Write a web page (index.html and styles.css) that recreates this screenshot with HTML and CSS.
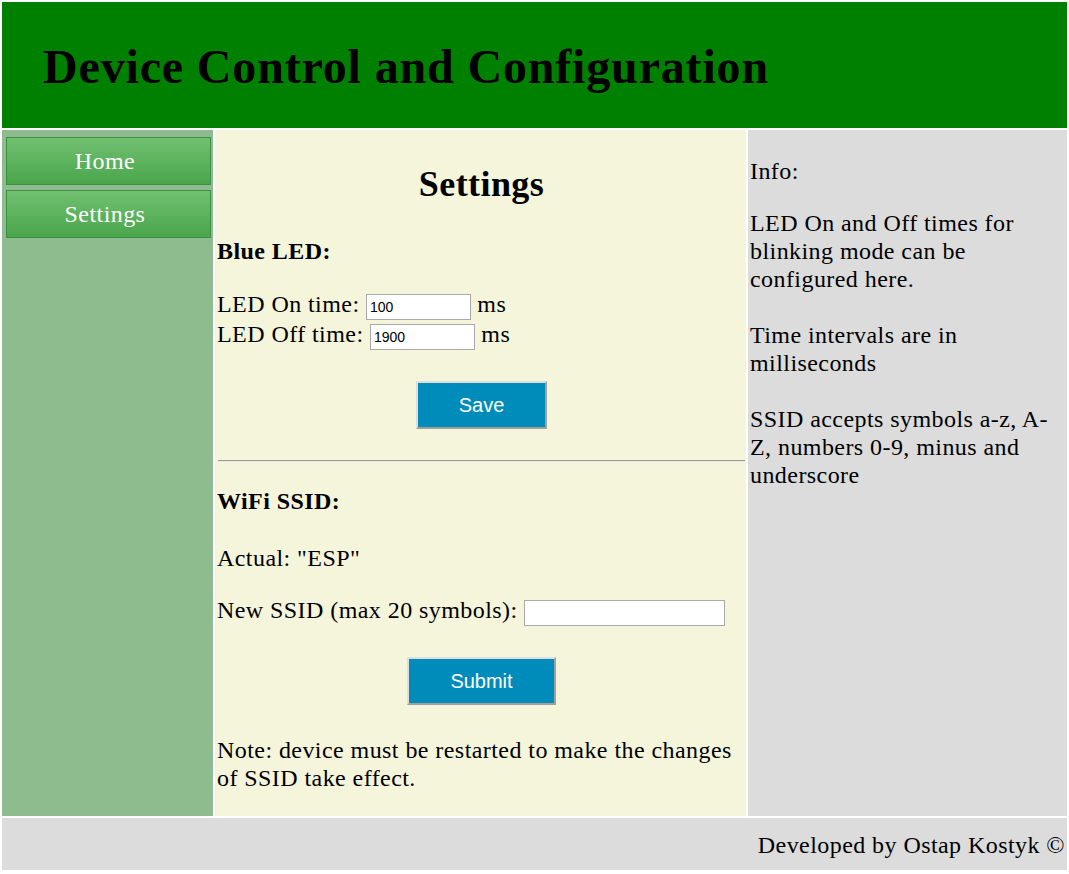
FILE: index.html
```html
<!DOCTYPE html>
<html lang="en">
<head>
<meta charset="utf-8">
<title>Device Control and Configuration</title>
<link rel="stylesheet" href="styles.css">
</head>
<body>
<div class="page">
  <header class="header">
    <h1 class="title">Device Control and Configuration</h1>
  </header>
  <nav class="sidebar">
    <a class="nav-btn" href="#">Home</a>
    <a class="nav-btn" href="#">Settings</a>
  </nav>
  <main class="content">
    <h2 class="content-title">Settings</h2>
    <p class="section-label">Blue LED:</p>
    <form class="led-form">
      <div class="field-row">LED On time: <input class="num-input" type="text" value="100"> ms</div>
      <div class="field-row">LED Off time: <input class="num-input" type="text" value="1900"> ms</div>
      <div class="btn-wrap btn-wrap-save"><button class="action-btn save-btn" type="button">Save</button></div>
    </form>
    <hr class="divider">
    <p class="section-label section-label-wifi">WiFi SSID:</p>
    <p class="text-line actual-line">Actual: "ESP"</p>
    <p class="text-line ssid-line">New SSID (max 20 symbols): <input class="ssid-input" type="text"></p>
    <div class="btn-wrap btn-wrap-submit"><button class="action-btn submit-btn" type="button">Submit</button></div>
    <p class="text-line note">Note: device must be restarted to make the changes of SSID take effect.</p>
  </main>
  <aside class="info">
    <p class="info-p">Info:</p>
    <p class="info-p">LED On and Off times for blinking mode can be configured here.</p>
    <p class="info-p info-gap">Time intervals are in milliseconds</p>
    <p class="info-p info-gap">SSID accepts symbols a-z, A-Z, numbers 0-9, minus and underscore</p>
  </aside>
  <footer class="footer">Developed by Ostap Kostyk &copy;</footer>
</div>
</body>
</html>
```
FILE: styles.css
```css
html, body {
  background: #ffffff;
}
body {
  margin: 2px;
  font-family: "Liberation Serif", "Times New Roman", serif;
  font-size: 24px;
  line-height: 28px;
  letter-spacing: 0.018em;
  color: #000;
}
.page {
  display: grid;
  grid-template-columns: 211px 531px 1fr;
  grid-template-rows: 126px 686px 52px;
  gap: 2px;
}
.header {
  grid-column: 1 / 4;
  background: #008000;
  padding: 5px 40px 0 41px;
}
.title {
  margin: 32px 0;
  font-size: 48px;
  line-height: normal;
  letter-spacing: 0.84px;
  font-weight: bold;
  color: #000;
}
.sidebar {
  background: #8fbc8f;
  padding: 7px 2px 0 4px;
  display: flex;
  flex-direction: column;
  gap: 5px;
}
.nav-btn {
  display: block;
  height: 46px;
  line-height: 46px;
  padding-right: 7px;
  border: 1px solid #3f8f42;
  background: linear-gradient(to bottom, #70c070, #4aa64c);
  color: #ffffff;
  text-decoration: none;
  text-align: center;
  font-size: 24px;
}
.content {
  background: #f5f5dc;
  padding: 2px 0 0 2px;
}
.content-title {
  font-size: 36px;
  line-height: normal;
  text-align: center;
  margin: 31px 0 0;
}
.section-label {
  font-weight: bold;
  margin: 32px 0 0;
}
.led-form {
  margin: 25px 0 0;
}
.field-row {
  line-height: 29px;
}
.num-input, .ssid-input {
  box-sizing: border-box;
  height: 26px;
  border: 1px solid #a9a9a9;
  background: #fff;
  font-family: "Liberation Sans", Arial, sans-serif;
  font-size: 14px;
  letter-spacing: normal;
  padding: 1px 3px;
}
.num-input {
  width: 105px;
}
.ssid-input {
  width: 201px;
}
.btn-wrap {
  text-align: center;
  line-height: normal;
}
.btn-wrap-save {
  margin-top: 31px;
}
.action-btn {
  box-sizing: border-box;
  background: #008cba;
  color: #ffffff;
  font-family: "Liberation Sans", Arial, sans-serif;
  font-size: 20px;
  letter-spacing: normal;
  height: 48px;
  padding: 0 41px;
  border: 2px solid;
  border-color: #dedede #a0a0a0 #a0a0a0 #dedede;
  vertical-align: top;
}
.divider {
  margin: 31px 1px 0 1px;
  border: none;
  border-top: 1px solid #9a9a9a;
  border-bottom: 1px solid #e8e8e0;
}
.section-label-wifi {
  margin-top: 25px;
}
.text-line {
  margin: 24px 0 0;
}
.actual-line {
  margin-top: 29px;
}
.btn-wrap-submit {
  margin-top: 31px;
}
.note {
  margin-top: 31px;
}
.info {
  background: #dcdcdc;
  padding: 3px 2px 0 2px;
}
.info-p {
  margin: 24px 0 0;
}
.info-gap {
  margin-top: 28px;
}
.footer {
  grid-column: 1 / 4;
  background: #dcdcdc;
  text-align: right;
  padding: 13px 2px 0 0;
}
```
